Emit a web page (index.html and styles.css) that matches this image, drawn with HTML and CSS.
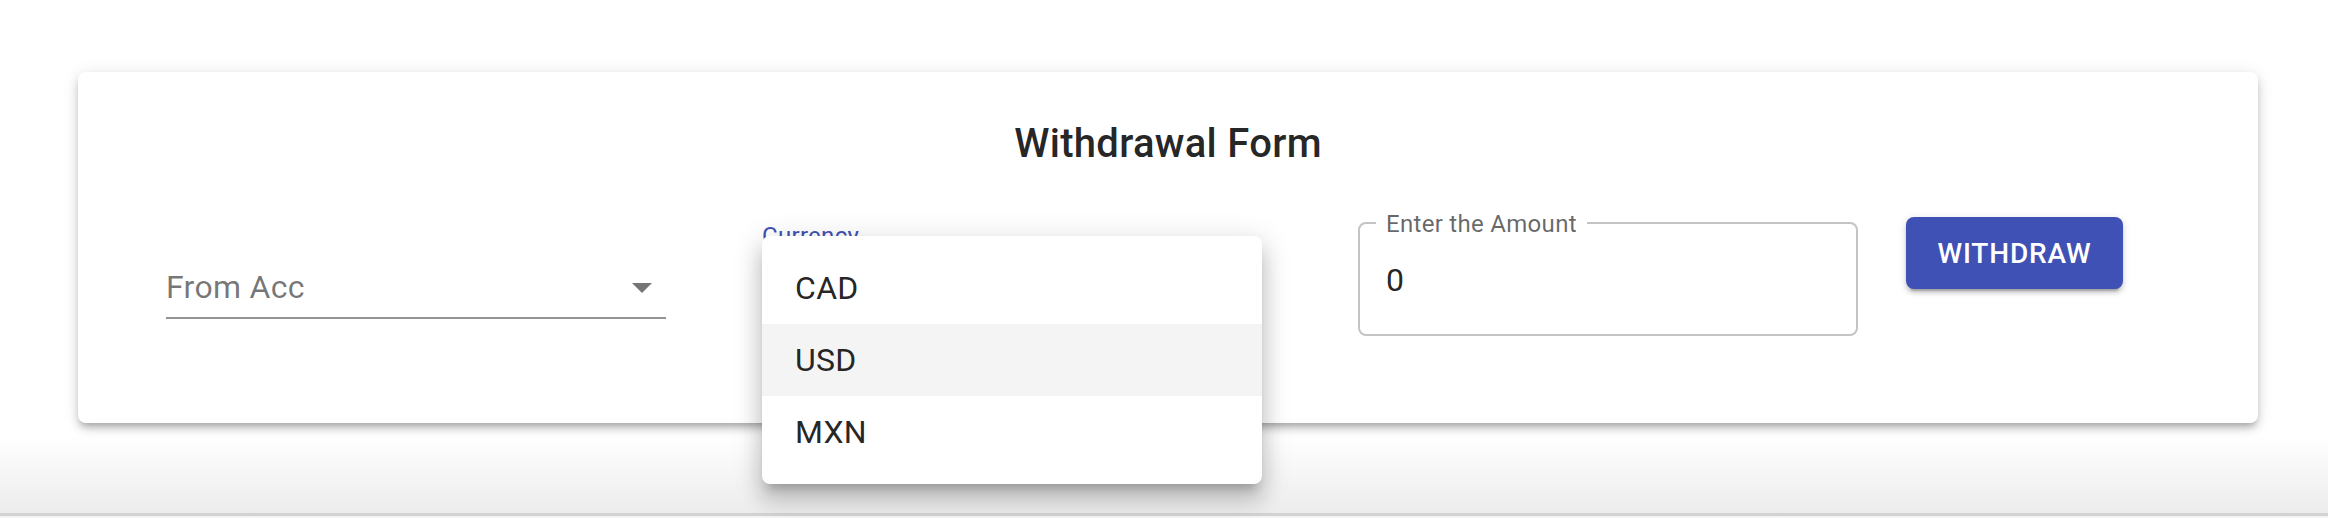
FILE: index.html
```html
<!DOCTYPE html>
<html lang="en">
<head>
<meta charset="utf-8">
<title>Withdrawal Form</title>
<link rel="stylesheet" href="styles.css">
</head>
<body>
<main class="page">
  <section class="card">
    <h2 class="title">Withdrawal Form</h2>
    <form class="row">
      <div class="select-field">
        <div class="select-input">
          <span class="placeholder">From Acc</span>
          <svg class="arrow" viewBox="0 0 24 24" width="48" height="48"><path d="M7 10l5 5 5-5z"/></svg>
        </div>
      </div>
      <div class="select-field currency">
        <label class="shrunk-label">Currency</label>
        <div class="select-input"></div>
        <ul class="menu">
          <li class="menu-item">CAD</li>
          <li class="menu-item hovered">USD</li>
          <li class="menu-item">MXN</li>
        </ul>
      </div>
      <div class="outlined-field">
        <fieldset class="outline"><legend>Enter the Amount</legend></fieldset>
        <label class="outlined-label">Enter the Amount</label>
        <span class="value">0</span>
      </div>
      <button type="button" class="btn">Withdraw</button>
    </form>
  </section>
</main>
</body>
</html>
```
FILE: styles.css
```css
html {
  background: linear-gradient(to bottom, #ffffff 0, #ffffff 436px, #ececec 513px, #d2d2d2 513px, #d2d2d2 516px, #f4f4f4 516px);
  min-height: 100%;
}
body {
  margin: 0;
  font-family: Roboto, "Liberation Sans", sans-serif;
  color: rgba(0, 0, 0, 0.87);
}
.page {
  height: 518px;
  padding-top: 72px;
  padding-left: 78px;
  box-sizing: border-box;
}
.card {
  width: 2180px;
  height: 351px;
  box-sizing: border-box;
  background: #fff;
  border-radius: 8px;
  box-shadow: 0 6px 6px -4px rgba(0,0,0,0.2), 0 6px 8px 0 rgba(0,0,0,0.14), 0 2px 16px 0 rgba(0,0,0,0.12);
  padding-top: 40px;
}
.title {
  margin: 0;
  text-align: center;
  font-size: 40px;
  font-weight: 500;
  line-height: 64px;
  letter-spacing: 0.3px;
  color: rgba(0, 0, 0, 0.87);
}
.row {
  display: flex;
  align-items: flex-start;
  padding-left: 88px;
  margin-top: 41px;
}
.select-field {
  position: relative;
  width: 500px;
  margin-top: 7px;
  margin-right: 96px;
  padding-top: 32px;
}
.select-input {
  position: relative;
  height: 61px;
  border-bottom: 2px solid #949494;
  display: flex;
  align-items: center;
}
.placeholder {
  font-size: 32px;
  color: rgba(0, 0, 0, 0.54);
  letter-spacing: 0.3px;
}
.arrow {
  position: absolute;
  right: 0;
  top: 50%;
  margin-top: -24px;
  fill: rgba(0, 0, 0, 0.54);
}
.currency .select-input {
  border-bottom-color: #3f51b5;
}
.shrunk-label {
  position: absolute;
  top: 0;
  left: 0;
  font-size: 24px;
  line-height: 24px;
  color: #3f51b5;
  letter-spacing: 0.3px;
}
.menu {
  position: absolute;
  top: 12px;
  left: 0;
  width: 500px;
  margin: 0;
  padding: 16px 0;
  list-style: none;
  background: #fff;
  border-radius: 8px;
  box-shadow: 0 10px 10px -6px rgba(0,0,0,0.2), 0 16px 20px 2px rgba(0,0,0,0.14), 0 6px 28px 4px rgba(0,0,0,0.12);
  z-index: 2;
}
.menu-item {
  height: 72px;
  line-height: 72px;
  padding-left: 33px;
  font-size: 32px;
  letter-spacing: 0.3px;
  color: rgba(0, 0, 0, 0.87);
}
.menu-item.hovered {
  background: #f4f4f4;
}
.outlined-field {
  position: relative;
  width: 500px;
  height: 112px;
  margin-top: 7px;
  box-sizing: border-box;
  display: flex;
  align-items: center;
  padding-left: 28px;
}
.outline {
  position: absolute;
  top: -10px;
  left: 0;
  right: 0;
  bottom: 0;
  margin: 0;
  padding: 0 16px;
  border: 2px solid #c4c4c4;
  border-radius: 8px;
  pointer-events: none;
}
.outline legend {
  padding: 0 10px;
  font-size: 24px;
  line-height: 18px;
  height: 18px;
  visibility: hidden;
  letter-spacing: 0.3px;
}
.outlined-label {
  position: absolute;
  left: 28px;
  top: -12px;
  font-size: 24px;
  line-height: 24px;
  color: rgba(0, 0, 0, 0.6);
  letter-spacing: 0.3px;
}
.value {
  font-size: 32px;
  color: rgba(0, 0, 0, 0.87);
}
.btn {
  margin-left: 48px;
  height: 72px;
  width: 217px;
  border: 0;
  border-radius: 8px;
  background: #3f51b5;
  color: #fff;
  font-family: Roboto, "Liberation Sans", sans-serif;
  font-size: 28px;
  font-weight: 500;
  letter-spacing: 0.8px;
  text-transform: uppercase;
  box-shadow: 0 6px 2px -4px rgba(0,0,0,0.2), 0 4px 4px 0 rgba(0,0,0,0.14), 0 2px 10px 0 rgba(0,0,0,0.12);
  padding: 0;
}
```
